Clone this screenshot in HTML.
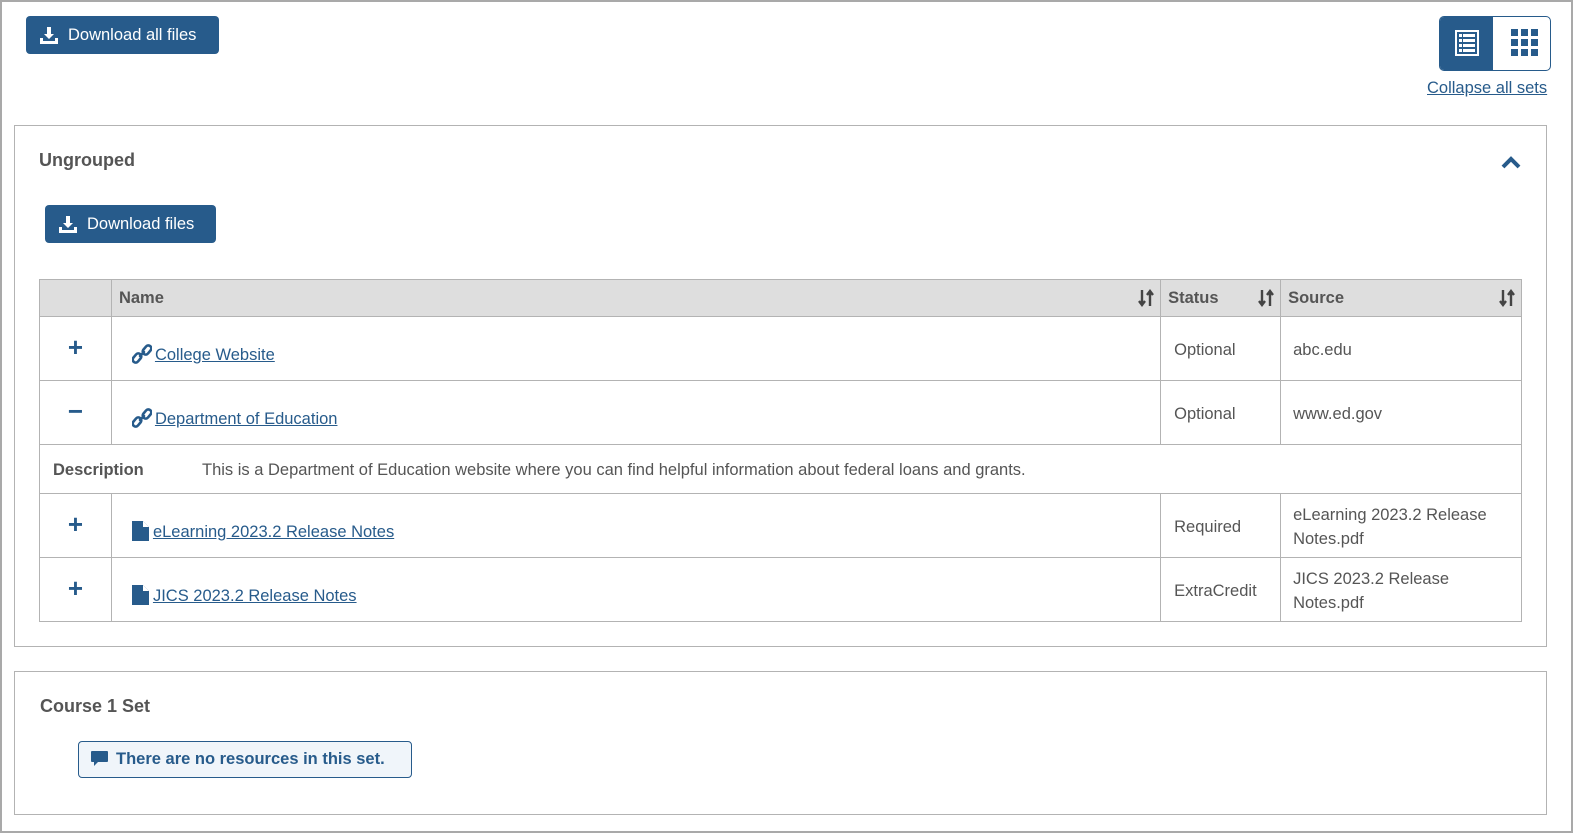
<!DOCTYPE html>
<html><head><meta charset="utf-8"><style>
*{box-sizing:border-box;margin:0;padding:0}
body{width:1573px;height:835px;background:#fff;font-family:"Liberation Sans",sans-serif;color:#555;font-size:16px;position:relative;overflow:hidden}
.frame{position:absolute;left:0;top:0;width:1573px;height:833px;border:2px solid #a9a9a9}
.btn{position:absolute;background:#275b8b;color:#fff;border-radius:4px;font-size:16.5px;display:flex;align-items:center;gap:10px;padding-left:14px}
.panel{position:absolute;left:14px;width:1533px;border:1px solid #b3b3b3}
h3{position:absolute;font-size:18px;font-weight:bold;color:#555}
table{position:absolute;left:39px;top:279px;width:1483px;border-collapse:collapse}
td,th{border:1px solid #b3b3b3;font-size:16.5px;text-align:left;vertical-align:middle}
th{background:#dedede;height:37px;padding-left:7px;font-weight:bold;color:#555;position:relative}
th .s{position:absolute;right:6px;top:9px}
td{height:64px}
.pm{text-align:center;color:#275b8b;font-size:26px;font-weight:bold;padding-bottom:2px}
.nm{padding-left:20px;padding-top:12px}
.nm a{color:#275b8b;text-decoration:underline}
.nm svg{vertical-align:-4px;margin-right:3px}
.st{padding-left:13px;padding-top:4px}
.sr{padding-left:12px;line-height:24px;padding-top:2px}
a{color:#275b8b}
</style></head><body>
<div class="frame"></div>
<div class="btn" style="left:26px;top:16px;width:193px;height:38px">
<svg width="18" height="17" viewBox="0 0 18 17"><path d="M7 0h4v7h3l-5 5-5-5h3z M0 11h3v3h12v-3h3v6H0z" fill="#fff"/></svg>Download all files</div>
<div style="position:absolute;left:1439px;top:16px;width:112px;height:55px;border:1px solid #275b8b;border-radius:5px;overflow:hidden">
<div style="position:absolute;left:0;top:0;width:53px;height:55px;background:#275b8b"></div>
<svg style="position:absolute;left:14px;top:12px" width="26" height="28" viewBox="0 0 26 28"><rect x="1" y="1" width="24" height="26" fill="#fff"/><rect x="3" y="3" width="20" height="22" fill="#275b8b"/><g fill="#fff"><rect x="5" y="5" width="3" height="3"/><rect x="9" y="5" width="12" height="3"/><rect x="5" y="10" width="3" height="3"/><rect x="9" y="10" width="12" height="3"/><rect x="5" y="15" width="3" height="3"/><rect x="9" y="15" width="12" height="3"/><rect x="5" y="20" width="3" height="3"/><rect x="9" y="20" width="12" height="3"/></g></svg>
<svg style="position:absolute;left:71px;top:12px" width="27" height="27" viewBox="0 0 27 27" fill="#275b8b"><rect x="0" y="0" width="7" height="7"/><rect x="10" y="0" width="7" height="7"/><rect x="20" y="0" width="7" height="7"/><rect x="0" y="10" width="7" height="7"/><rect x="10" y="10" width="7" height="7"/><rect x="20" y="10" width="7" height="7"/><rect x="0" y="20" width="7" height="7"/><rect x="10" y="20" width="7" height="7"/><rect x="20" y="20" width="7" height="7"/></svg>
</div>
<a style="position:absolute;left:1427px;top:79px;font-size:16.5px;text-decoration:underline">Collapse all sets</a>

<div class="panel" style="top:125px;height:522px"></div>
<h3 style="left:39px;top:150px">Ungrouped</h3>
<svg style="position:absolute;left:1501px;top:155px" width="20" height="14" viewBox="0 0 20 14"><path d="M2 12L10 4l8 8" stroke="#275b8b" stroke-width="4" fill="none"/></svg>
<div class="btn" style="left:45px;top:205px;width:171px;height:38px">
<svg width="18" height="17" viewBox="0 0 18 17"><path d="M7 0h4v7h3l-5 5-5-5h3z M0 11h3v3h12v-3h3v6H0z" fill="#fff"/></svg>Download files</div>

<table>
<colgroup><col style="width:72px"><col style="width:1050px"><col style="width:120px"><col style="width:241px"></colgroup>
<tr><th></th><th>Name<svg class="s" width="16" height="18" viewBox="0 0 16 18"><g stroke="#444" stroke-width="2.4" fill="none"><path d="M4 1v15M1 12l3 4 3-4"/><path d="M12 17V2M9 6l3-4 3 4"/></g></svg></th><th>Status<svg class="s" width="16" height="18" viewBox="0 0 16 18"><g stroke="#444" stroke-width="2.4" fill="none"><path d="M4 1v15M1 12l3 4 3-4"/><path d="M12 17V2M9 6l3-4 3 4"/></g></svg></th><th>Source<svg class="s" width="16" height="18" viewBox="0 0 16 18"><g stroke="#444" stroke-width="2.4" fill="none"><path d="M4 1v15M1 12l3 4 3-4"/><path d="M12 17V2M9 6l3-4 3 4"/></g></svg></th></tr>
<tr><td class="pm">+</td><td class="nm"><svg width="20" height="20" viewBox="0 0 20 20"><g stroke="#275b8b" stroke-width="2.6" fill="none" stroke-linecap="round"><rect x="2" y="9" width="6" height="10" rx="3" transform="rotate(40 5 14)"/><rect x="12" y="1" width="6" height="10" rx="3" transform="rotate(40 15 6)"/><path d="M8 12l4-4"/></g></svg><a>College Website</a></td><td class="st">Optional</td><td class="sr">abc.edu</td></tr>
<tr><td class="pm">−</td><td class="nm"><svg width="20" height="20" viewBox="0 0 20 20"><g stroke="#275b8b" stroke-width="2.6" fill="none" stroke-linecap="round"><rect x="2" y="9" width="6" height="10" rx="3" transform="rotate(40 5 14)"/><rect x="12" y="1" width="6" height="10" rx="3" transform="rotate(40 15 6)"/><path d="M8 12l4-4"/></g></svg><a>Department of Education</a></td><td class="st">Optional</td><td class="sr">www.ed.gov</td></tr>
<tr><td colspan="4" style="height:49px;padding-left:13px;padding-top:2px"><b style="display:inline-block;width:149px">Description</b>This is a Department of Education website where you can find helpful information about federal loans and grants.</td></tr>
<tr><td class="pm">+</td><td class="nm"><svg width="18" height="20" viewBox="0 0 18 20"><path d="M0 0h11l6 6v14H0z" fill="#275b8b"/><path d="M11 0v6h6" fill="#fff"/></svg><a>eLearning 2023.2 Release Notes</a></td><td class="st">Required</td><td class="sr">eLearning 2023.2 Release<br>Notes.pdf</td></tr>
<tr><td class="pm">+</td><td class="nm"><svg width="18" height="20" viewBox="0 0 18 20"><path d="M0 0h11l6 6v14H0z" fill="#275b8b"/><path d="M11 0v6h6" fill="#fff"/></svg><a>JICS 2023.2 Release Notes</a></td><td class="st">ExtraCredit</td><td class="sr">JICS 2023.2 Release<br>Notes.pdf</td></tr>
</table>

<div class="panel" style="top:671px;height:144px"></div>
<h3 style="left:40px;top:696px">Course 1 Set</h3>
<div style="position:absolute;left:78px;top:741px;width:334px;height:37px;border:1px solid #275b8b;border-radius:4px;background:#f0f5fa;color:#275b8b;font-weight:bold;font-size:16.5px;padding:8px 0 0 12px">
<svg width="17" height="16" viewBox="0 0 17 16" style="vertical-align:-3px;margin-right:8px"><path d="M1 0h15a1 1 0 011 1v9a1 1 0 01-1 1H7l-4 4v-4H1a1 1 0 01-1-1V1a1 1 0 011-1z" fill="#275b8b"/></svg>There are no resources in this set.</div>
</body></html>
